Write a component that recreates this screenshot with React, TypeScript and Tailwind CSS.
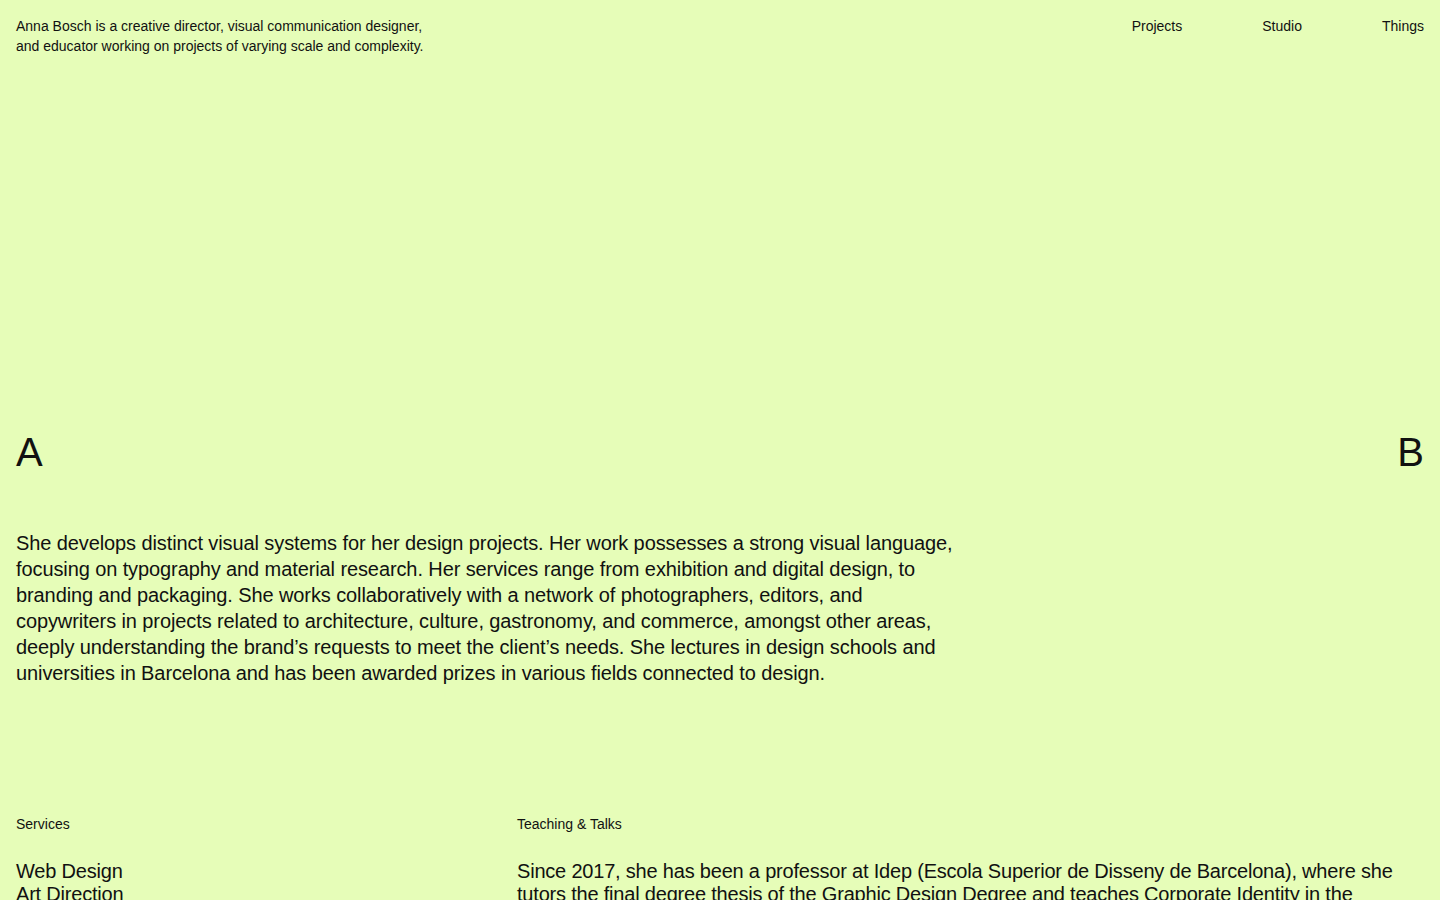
export default function App() {
  const services = [
    "Web Design",
    "Art Direction",
    "Branding",
    "Exhibition Design",
    "Editorial Design",
    "Packaging",
  ];

  return (
    <main className="min-h-screen bg-[#e6fdb8] text-[#111111] px-4 pt-4 pb-16 font-['Liberation_Sans',Arial,sans-serif]">
      {/* Header */}
      <header className="flex justify-between items-start">
        <p className="text-[14px] leading-[20px]">
          Anna Bosch is a creative director, visual communication designer,
          <br />
          and educator working on projects of varying scale and complexity.
        </p>
        <nav className="flex gap-20 text-[14px] leading-[20px]">
          <a href="#">Projects</a>
          <a href="#">Studio</a>
          <a href="#">Things</a>
        </nav>
      </header>

      {/* Letters */}
      <div className="mt-[376px] flex justify-between text-[40px] leading-[40px]">
        <span>A</span>
        <span>B</span>
      </div>

      {/* Intro */}
      <p className="mt-[58px] w-[980px] text-[20px] leading-[26px] tracking-[-0.1px]">
        She develops distinct visual systems for her design projects. Her work
        possesses a strong visual language,
        <br />
        focusing on typography and material research. Her services range from
        exhibition and digital design, to
        <br />
        branding and packaging. She works collaboratively with a network of
        photographers, editors, and
        <br />
        copywriters in projects related to architecture, culture, gastronomy,
        and commerce, amongst other areas,
        <br />
        deeply understanding the brand’s requests to meet the client’s needs.
        She lectures in design schools and
        <br />
        universities in Barcelona and has been awarded prizes in various fields
        connected to design.
      </p>

      {/* Details */}
      <section className="mt-[128px] grid grid-cols-[501px_1fr]">
        <div>
          <h2 className="text-[14px] leading-[20px]">Services</h2>
          <ul className="mt-[26px] text-[20px] leading-[23px] tracking-[-0.2px]">
            {services.map((s) => (
              <li key={s}>{s}</li>
            ))}
          </ul>
        </div>
        <div>
          <h2 className="text-[14px] leading-[20px]">Teaching &amp; Talks</h2>
          <p className="mt-[26px] text-[20px] leading-[23px] tracking-[-0.2px]">
            Since 2017, she has been a professor at Idep (Escola Superior de
            Disseny de Barcelona), where she tutors the final degree thesis of
            the Graphic Design Degree and teaches Corporate Identity in the
            Master’s Degree in Branding. She has given talks and workshops at
            Elisava, EINA, BAU and the Universitat de Barcelona.
          </p>
        </div>
      </section>
    </main>
  );
}
